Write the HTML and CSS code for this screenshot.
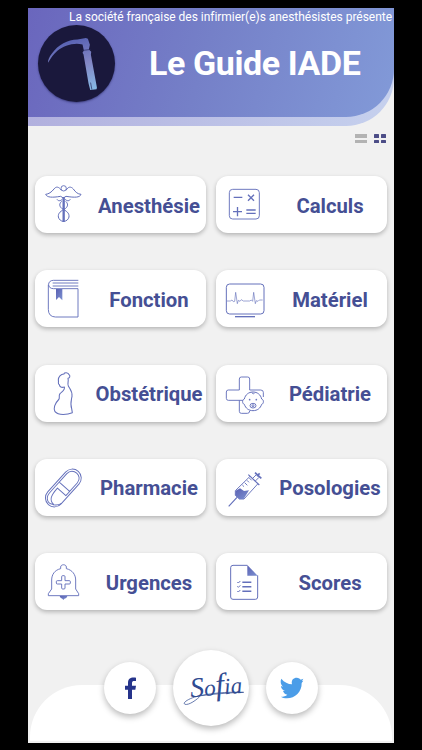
FILE: index.html
```
<!DOCTYPE html>
<html lang="fr">
<head>
<meta charset="utf-8">
<title>Le Guide IADE</title>
<link rel="stylesheet" href="styles.css">
</head>
<body>
<svg class="defs" width="0" height="0" aria-hidden="true">
  <defs>
    <linearGradient id="ink" x1="0" y1="0" x2="1" y2="1"><stop offset="0" stop-color="#5b61b3"/><stop offset="1" stop-color="#7c91d1"/></linearGradient>
    <linearGradient id="blade" gradientUnits="userSpaceOnUse" x1="170" y1="110" x2="215" y2="270"><stop offset="0" stop-color="#5660b2"/><stop offset="0.5" stop-color="#8386c4"/><stop offset="1" stop-color="#86b9e5"/></linearGradient>
  </defs>
</svg>
<div class="app">
  <header class="banner">
    <div class="hero">
      <p class="tagline">La société française des infirmier(e)s anesthésistes présente</p>
      <div class="brand">
        <div class="logo">
          <svg viewBox="55 75 230 230"><path fill="url(#blade)" d="M85 188C84 180 89 170 96 161C116 132 143 119 173 118L198 114L204 116L210 134L207 148L214 155L213 164L231 262L230 267L211 269L206 250L191 163L188 158L192 151L188 133C160 127 132 137 113 152C101 162 93 174 85 188Z"/><path d="M188 151l24-3M216 268l-4-21" stroke="#25275a" stroke-width="2" fill="none"/></svg>
        </div>
        <h1>Le Guide IADE</h1>
      </div>
    </div>
  </header>
  <div class="views">
    <span class="rows"><i></i><i></i></span>
    <span class="tiles"><i></i><i></i><i></i><i></i></span>
  </div>
  <main class="menu">
    <a class="card">
      <svg class="icon" viewBox="21 33 180 171">
        <circle cx="107" cy="70" r="8"/><path stroke-width="3" d="M100 76C92 64 84 64 78 72C70 82 62 87 53 88C57 98 73 98 98 94L106 99L114 94C140 98 156 98 159 88C149 87 143 82 136 72C129 64 121 64 114 76"/><path stroke-width="7" d="M107 96V171"/><path stroke-width="3" d="M87 103C92 111 101 106 104 101M127 103C122 111 113 106 110 101M101 109C93 116 94 124 101 130C116 139 124 143 123 156C121 164 115 168 109 169M113 109C121 116 120 124 113 130C98 139 90 143 91 156C93 164 99 168 105 169"/>
      </svg><span class="label">Anesthésie</span></a>
    <a class="card">
      <svg class="icon" viewBox="24 33 180 171"><rect x="64" y="73" width="90" height="89" rx="10"/><path stroke-width="4" d="M77 97h26M120 89l18 18M138 89l-18 18M75 140h27M88.500 126v28M115 135h28M115 145h28"/></svg><span class="label">Calculs</span></a>
    <a class="card">
      <svg class="icon" viewBox="21 30 180 171"><path d="M151 61H76C57 61 57 86 76 86H150V171H82Q61 170 61 148V74M151 69H74M151 78H74"/><path class="solid" d="M84 87h19v34l-10-10-9 9z"/></svg><span class="label">Fonction</span></a>
    <a class="card">
      <svg class="icon" viewBox="24 30 180 171"><rect x="55" y="72" width="113" height="90" rx="10" stroke-width="3"/><path stroke-width="1.900" d="M57 123h10l5-3 4 5 4-1 3-27 5 34 3-10 5 3 4-5 6 4h19l5-3 4 4 3-27 5 34 3-9 5 2 4-4h10"/><path stroke-width="4" d="M81 170h60"/></svg><span class="label">Matériel</span></a>
    <a class="card">
      <svg class="icon" viewBox="21 28 180 171"><path stroke-width="3.200" d="M108 55C108 50 121 49 123 57C128 61 125 67 120 68C123 78 117 84 121 91C127 102 134 108 132 122C129 138 126 145 131 159L133 171C119 177 91 180 81 168C75 158 81 143 91 133C98 127 90 122 96 114C103 107 112 103 109 94C100 97 95 94 94 87C88 84 93 81 91 73C91 64 98 55 108 55Z"/></svg><span class="label">Obstétrique</span></a>
    <a class="card">
      <svg class="icon" viewBox="24 28 180 171"><path d="M108 134H61Q55 134 55 128V109Q55 103 61 103H94V70Q94 64 100 64H119Q125 64 125 70V103H158Q166 103 166 110V124M94 134V167Q94 173 100 173H118Q125 173 125 166"/><path fill="#fff" stroke-width="3" d="M109 130C112 117 122 109 135 109C148 109 158 117 161 130C168 132 168 144 161 146C157 158 148 165 135 165C122 165 113 158 109 146C102 144 102 132 109 130Z"/><ellipse cx="135" cy="150" rx="9" ry="7"/><circle cx="135" cy="150" r="3"/><path d="M131 110q5 9 9 2"/><circle class="solid" cx="125" cy="132" r="2.500"/><circle class="solid" cx="145" cy="132" r="2.500"/></svg><span class="label">Pédiatrie</span></a>
    <a class="card">
      <svg class="icon" viewBox="21 27 180 171"><g transform="rotate(-48 106 114)"><rect x="39" y="87" width="134" height="54" rx="27"/><path d="M91 93H145C173 93 173 135 145 135H106M91 93H67C47 94 38 112 50 125C50 107 64 101 94 101V135H111V93M46 117C49 131 59 138 68 141"/></g></svg><span class="label">Pharmacie</span></a>
    <a class="card">
      <svg class="icon" viewBox="24 27 180 171"><path stroke-width="3.500" d="M62 169L87 142M121 74L154 105"/><path d="M126 79L82 122V136L94 147H108L149 102M134 85l11-11 8 8-11 11M110 98l8 8M103 105l5 5M117 91l6 6M124 84l7 7"/><path class="solid" d="M83 122l13-7 12 8 15-2-16 26H94L82 136z"/><path stroke-width="5" d="M141 68l19 17M147 78l8-8"/></svg><span class="label">Posologies</span></a>
    <a class="card">
      <svg class="icon" viewBox="21 39 180 171"><path d="M98 86V81C98 72 115 72 115 81V86C133 90 143 104 143 120V147L152 161V167H61V161L71 147V120C71 104 80 90 98 86Z"/><path d="M101 110Q101 107 104 107H108Q111 107 111 110V122H124Q127 122 127 125V129Q127 132 124 132H111V144Q111 147 108 147H104Q101 147 101 144V132H88Q85 132 85 129V125Q85 122 88 122H101Z"/><path class="solid" d="M95 168h23c-1 6-6 7-9 8l-3 4-3-4c-4-1-7-3-8-8z"/></svg><span class="label">Urgences</span></a>
    <a class="card">
      <svg class="icon" viewBox="564 39 180 171"><path stroke-width="3" d="M658 76H615Q608 76 608 83V171Q608 178 615 178H682Q689 178 689 171V106"/><path class="solid" d="M658 75L689 107H658z"/><path stroke-width="4.500" d="M643 127h27M643 140h27M643 154h27"/><path stroke-width="3" d="M628 126l3 3 6-6M628 139l3 3 6-6M628 153l3 3 6-6"/></svg><span class="label">Scores</span></a>
  </main>
  <footer class="dock">
    <a class="round"><svg viewBox="252 66 156 156"><path fill="#26348b" d="M324 177V149H315V137H324V129C324 116 332 111 348 113V123C339 122 336 123 336 130V137H348L346 149H336V177Z"/></svg></a>
    <a class="round big"><span class="script"><span class="cap">S</span>o<span class="tall">f</span>ia</span><svg class="swash" viewBox="459 30 228 228"><path d="M544 165C530 180 507 196 495 193C485 188 510 174 532 169C570 160 618 155 671 157C628 158 572 163 544 167" fill="none" stroke="#304b91" stroke-width="2.200"/></svg></a>
    <a class="round"><svg viewBox="737 66 156 156"><path fill="#4b9de8" d="M783 116C792 127 803 132 815 133C812 119 820 113 829 113C835 113 839 116 841 119L849 116L845 123L849 122L844 129C845 155 824 175 800 175C793 175 786 173 782 170C790 170 796 168 801 164C794 163 790 159 788 153H794C787 151 782 145 782 138L788 140C781 134 779 124 783 116Z"/></svg></a>
  </footer>
</div>
</body>
</html>
```
FILE: styles.css
```
* { box-sizing: border-box; }
body {
  margin: 0;
  height: 750px;
  padding: 8px 28px 7px;
  background: #000;
  font-family: Roboto, "Liberation Sans", sans-serif;
  overflow: hidden;
}
.defs { display: block; }
.app {
  display: flex;
  flex-direction: column;
  width: 366px;
  height: 735px;
  background: #f1f1f1;
  overflow: hidden;
}
.banner {
  height: 118px;
  padding-bottom: 9px;
  border-bottom-right-radius: 48px;
  background: linear-gradient(100deg, #b0aedd, #c6d1ee);
}
.hero {
  height: 109px;
  border-bottom-right-radius: 48px;
  background: linear-gradient(107deg, #6a66bd, #7580c8 48%, #829ad8);
}
.tagline {
  margin: 0;
  padding: 2px 2px 0 0;
  height: 17px;
  color: #fff;
  font-size: 12px;
  line-height: 15px;
  letter-spacing: -0.03px;
  text-align: right;
  white-space: nowrap;
}
.brand { display: flex; align-items: center; height: 77px; padding-left: 10px; }
.logo {
  width: 77px;
  height: 77px;
  border-radius: 50%;
  background: #1a183c;
  box-shadow: 0 1px 2px rgba(20, 20, 70, 0.5);
}
.logo svg { display: block; width: 77px; height: 77px; }
h1 {
  margin: -2px 0 0 34px;
  color: #fff;
  font-size: 34px;
  font-weight: 700;
  line-height: 40px;
  letter-spacing: -0.4px;
  white-space: nowrap;
}
.views {
  display: flex;
  justify-content: flex-end;
  gap: 7px;
  height: 50px;
  padding: 8px 8px 0 0;
}
.rows, .tiles { display: grid; gap: 2px; width: 12px; height: 9px; }
.tiles { grid-template-columns: 1fr 1fr; }
.rows i { background: #b3b3b3; }
.tiles i { background: #4c4d87; border-radius: 0.5px; }
.menu {
  display: grid;
  grid-template-columns: 171px 171px;
  grid-auto-rows: 57px;
  gap: 37.300px 10px;
  padding-left: 7px;
}
.card {
  display: flex;
  align-items: center;
  border-radius: 12px;
  background: #fff;
  box-shadow: 0 2px 4px rgba(0, 0, 0, 0.25);
}
.icon {
  flex: none;
  width: 60px;
  height: 57px;
  margin-right: -3px;
  fill: none;
  stroke: #6470bb;
  stroke-width: 2.800;
  stroke-linejoin: round;
}
.icon .solid { fill: url(#ink); stroke: none; }
.label {
  flex: none;
  width: 114px;
  padding-top: 2px;
  color: #454f94;
  font-size: 20.300px;
  font-weight: 700;
  line-height: 24px;
  text-align: center;
  white-space: nowrap;
}
.dock {
  display: flex;
  justify-content: center;
  align-items: center;
  gap: 17px;
  height: 56px;
  margin: auto 2px 2px;
  padding-bottom: 50px;
  border-radius: 52px 52px 0 0;
  background: #fff;
}
.round {
  flex: none;
  width: 52px;
  height: 52px;
  border-radius: 50%;
  background: #fff;
  box-shadow: 0 3px 6px rgba(0, 0, 0, 0.27);
}
.round svg { display: block; width: 100%; height: 100%; }
.big { position: relative; width: 76px; height: 76px; }
.script {
  position: absolute;
  left: 17px;
  top: 18px;
  color: #304b91;
  font: italic 400 23px/34px "Liberation Serif", serif;
  transform: rotate(-5deg);
  white-space: nowrap;
}
.script .cap { font-size: 28px; }
.script .tall { font-size: 31px; }
.round .swash { position: absolute; inset: 0; }
```
